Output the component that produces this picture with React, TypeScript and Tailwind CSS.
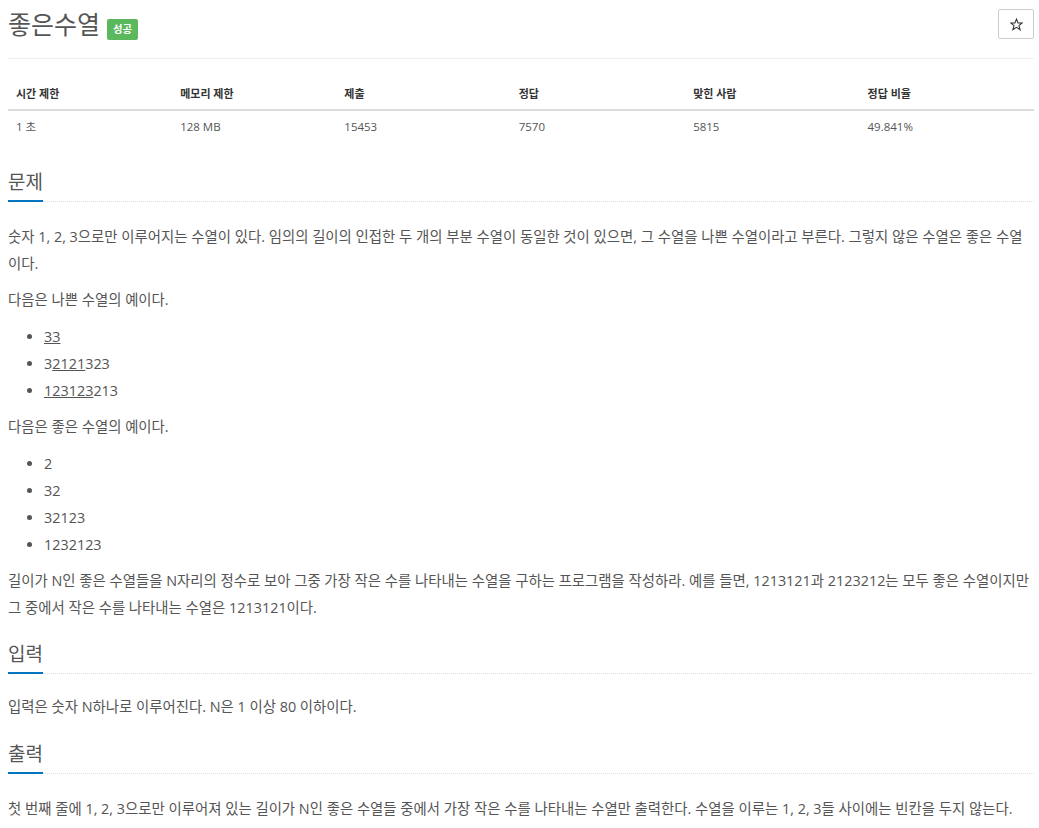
import React from "react";

const FONT = "font-['Open_Sans','Noto_Sans_CJK_KR',sans-serif]";

function StarIcon() {
  return (
    <svg width="13" height="13" viewBox="0 0 24 24" fill="none" stroke="#333" strokeWidth="2" strokeLinejoin="miter">
      <polygon points="12,2 14.9,9 22.5,9.2 16.5,14 18.7,21.5 12,17.2 5.3,21.5 7.5,14 1.5,9.2 9.1,9" />
    </svg>
  );
}

function SectionHeading({ title }: { title: string }) {
  return (
    <div className="flex border-b border-dotted border-[#ddd]">
      <h2 className="text-[19px] leading-[22px] text-[#555] font-normal pb-[7px] border-b-2 border-[#0076c0] -mb-[1px]">
        {title}
      </h2>
    </div>
  );
}

export default function App() {
  const headers = ["시간 제한", "메모리 제한", "제출", "정답", "맞힌 사람", "정답 비율"];
  const values = ["1 초", "128 MB", "15453", "7570", "5815", "49.841%"];
  const widths = ["w-[16%]", "w-[16%]", "w-[17%]", "w-[17%]", "w-[17%]", "w-[17%]"];

  return (
    <div className={`${FONT} bg-white text-[#555] pl-[8px] pr-[5px] min-h-[828px]`}>
      {/* Header */}
      <div className="flex justify-between items-start pt-[9px] pb-[18px] border-b border-[#eee]">
        <div className="flex items-start mt-[1px]">
          <h1 className="text-[25px] leading-[28px] font-normal text-[#555]">좋은수열</h1>
          <span className="ml-[7px] mt-[9px] h-[21px] px-[6px] rounded-[2px] bg-[#5cb85c] text-white text-[10.4px] font-bold leading-[21px]">
            성공
          </span>
        </div>
        <button className="w-[36px] h-[30px] border border-[#ccc] rounded-[2px] flex items-center justify-center bg-white">
          <StarIcon />
        </button>
      </div>

      {/* Info table */}
      <table className="w-full mt-[19px] border-collapse table-fixed">
        <thead>
          <tr className="border-b-2 border-[#ddd]">
            {headers.map((h, i) => (
              <th key={h} className={`${widths[i]} text-left font-bold text-[11px] leading-[17px] text-[#333] py-[7px] px-[8px]`}>
                {h}
              </th>
            ))}
          </tr>
        </thead>
        <tbody>
          <tr>
            {values.map((v) => (
              <td key={v} className="text-left text-[11.5px] leading-[17px] text-[#555] py-[7px] px-[8px]">
                {v}
              </td>
            ))}
          </tr>
        </tbody>
      </table>

      {/* 문제 */}
      <section className="mt-[29px]">
        <SectionHeading title="문제" />
        <div className="mt-[21px] text-[14.4px] leading-[27px]">
          <p className="mb-[9px]">
            숫자 1, 2, 3으로만 이루어지는 수열이 있다. 임의의 길이의 인접한 두 개의 부분 수열이 동일한 것이 있으면, 그 수열을 나쁜 수열이라고 부른다. 그렇지 않은 수열은 좋은 수열
            <br />
            이다.
          </p>
          <p className="mb-[9px]">다음은 나쁜 수열의 예이다.</p>
          <ul className="list-disc pl-[36px] mb-[9px] mt-[10px]">
            <li><u>33</u></li>
            <li>3<u>2121</u>323</li>
            <li><u>123123</u>213</li>
          </ul>
          <p className="mb-[9px]">다음은 좋은 수열의 예이다.</p>
          <ul className="list-disc pl-[36px] mb-[9px] mt-[10px]">
            <li>2</li>
            <li>32</li>
            <li>32123</li>
            <li>1232123</li>
          </ul>
          <p className="mb-[9px]">
            길이가 N인 좋은 수열들을 N자리의 정수로 보아 그중 가장 작은 수를 나타내는 수열을 구하는 프로그램을 작성하라. 예를 들면, 1213121과 2123212는 모두 좋은 수열이지만
            <br />
            그 중에서 작은 수를 나타내는 수열은 1213121이다.
          </p>
        </div>
      </section>

      {/* 입력 */}
      <section className="mt-[22px]">
        <SectionHeading title="입력" />
        <div className="mt-[19px] text-[14.4px] leading-[27px]">
          <p className="mb-[9px]">입력은 숫자 N하나로 이루어진다. N은 1 이상 80 이하이다.</p>
        </div>
      </section>

      {/* 출력 */}
      <section className="mt-[23px]">
        <SectionHeading title="출력" />
        <div className="mt-[21px] text-[14.4px] leading-[27px]">
          <p className="mb-[9px]">
            첫 번째 줄에 1, 2, 3으로만 이루어져 있는 길이가 N인 좋은 수열들 중에서 가장 작은 수를 나타내는 수열만 출력한다. 수열을 이루는 1, 2, 3들 사이에는 빈칸을 두지 않는다.
          </p>
        </div>
      </section>
    </div>
  );
}
